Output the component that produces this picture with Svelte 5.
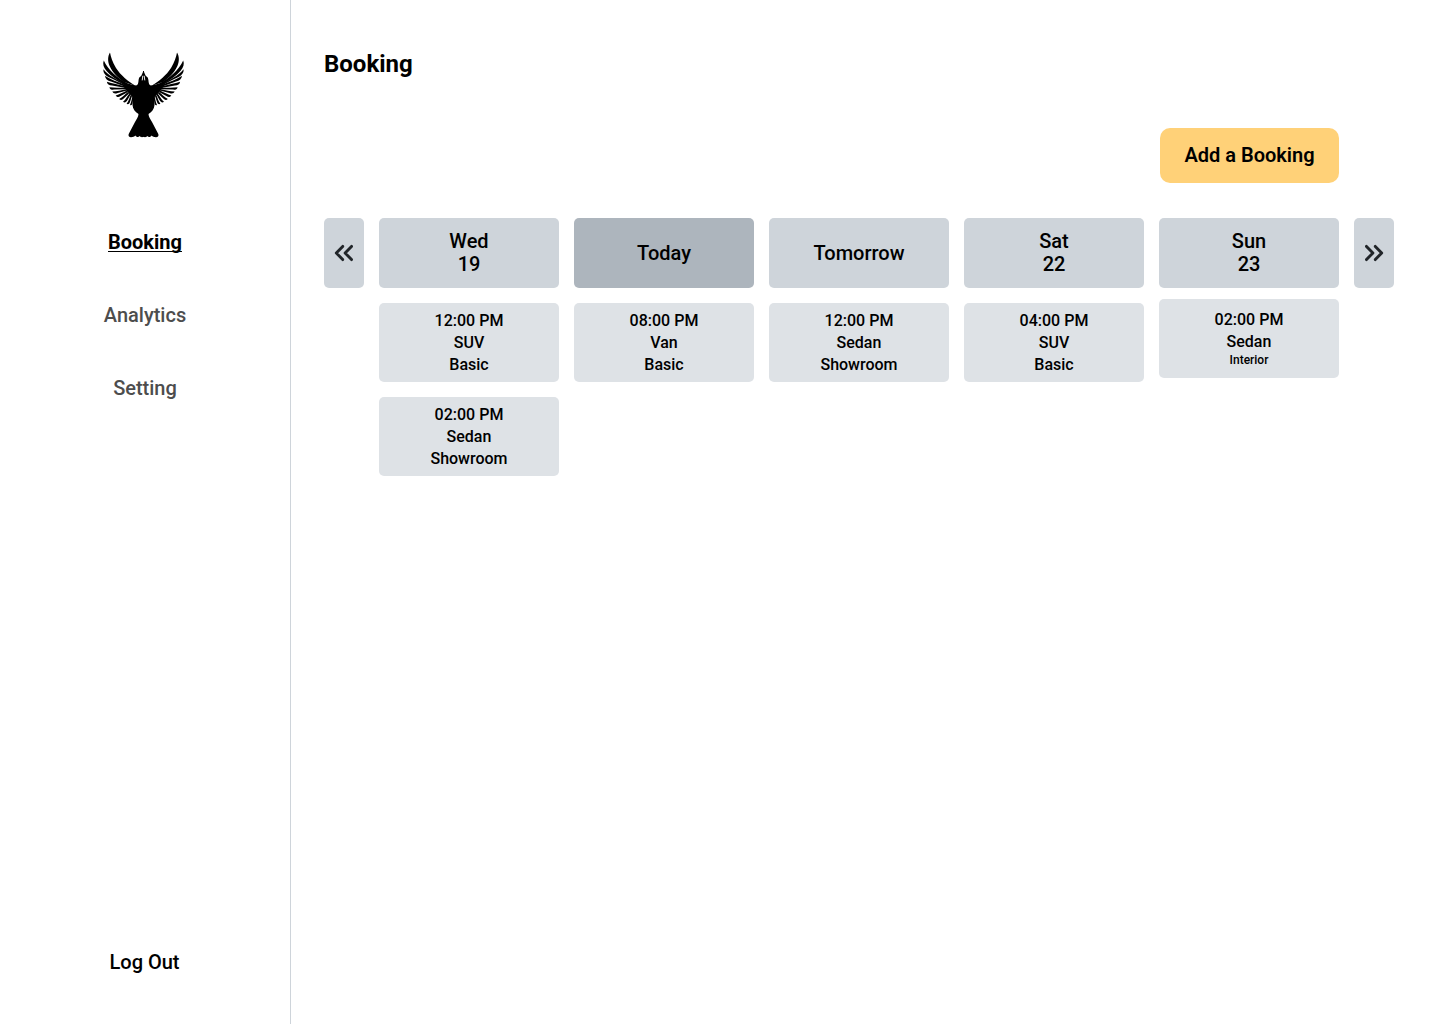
<script>
  const nav = ['Booking', 'Analytics', 'Setting'];
  const days = [
    { label: ['Wed', '19'], items: [['12:00 PM', 'SUV', 'Basic'], ['02:00 PM', 'Sedan', 'Showroom']] },
    { label: ['Today'], today: true, items: [['08:00 PM', 'Van', 'Basic']] },
    { label: ['Tomorrow'], items: [['12:00 PM', 'Sedan', 'Showroom']] },
    { label: ['Sat', '22'], items: [['04:00 PM', 'SUV', 'Basic']] },
    { label: ['Sun', '23'], compact: true, items: [['02:00 PM', 'Sedan', 'Interior']] }
  ];
</script>

{#snippet half()}
  <path d="M12 4.6 C9.6 8.5 9.6 13.5 11.6 18 C14.5 24.5 19 29 26 34 L38 38 C30 33.5 22.5 27 18 20 C14.5 14.5 12.8 9 12 4.6Z" />
  <path d="M5.8 12.6 C4.4 16 5.6 19.6 8.4 22.8 C12.5 27.5 18 31.5 26 36 L29 35.5 C19.5 30 10 22 5.8 12.6Z" />
  <path d="M5.5 21.2 C4.9 24.6 7.2 27.4 11 29.2 C16 31.6 21 34 28 38 L28 36.2 C18.5 31.5 10 27.5 5.5 21.2Z" />
  <path d="M7 27.8 C7.2 31 9.4 32.6 13 33.6 L28 39 L28 37.4 C20 33.8 12 31.6 7 27.8Z" />
  <path d="M8.9 33.8 C9.3 36.4 11 37.5 14 37.6 L28 40 L28 38.6 C21 36.4 14 35.6 8.9 33.8Z" />
  <path d="M11.4 39.2 C12 41.4 13.8 42.1 16.6 41.6 L28 41.2 L28 39.8 C21 39.4 16 39.9 11.4 39.2Z" />
  <path d="M14.3 43.6 C15.3 45.6 17 46 19.6 45 L29 42.6 L28.5 41.2 C23 42.2 19 43.5 14.3 43.6Z" />
  <path d="M17.7 47.4 C18.8 49.2 20.6 49.3 22.6 48 L30 44 L29 42.6 C25 44.4 21.5 46.8 17.7 47.4Z" />
  <path d="M21.2 51 C22.6 52.5 24.2 52.2 25.7 50.6 L31 45.4 L30 44 C27 46.3 24.5 49.4 21.2 51Z" />
  <path d="M25 53.8 C26.6 55 28.1 54.4 29.2 52.6 L32.6 46.6 L31.5 45.4 C29.2 48 27.8 51.6 25 53.8Z" />
  <path d="M28.6 55.8 C30 56.7 31.3 56 31.9 54.2 L34 48 L33 46.6 C31.2 50 30.8 53.4 28.6 55.8Z" />
  <path d="M32 57 C33.2 57.7 34.2 56.8 34.4 55 L36 48 L34.8 47.6 C33.6 51 33.4 54.4 32 57Z" />
  <path d="M46 23 L45.2 23 C44.8 25 43.6 26.6 43.2 28 C41.4 28.8 40.8 30 40.6 32 C40.4 35 40 37.4 38 37.6 C33 37 28 35 24 32.6 L26.5 40 L30.5 45 L34.5 49 L34.5 57 C34.8 61 37 64 40.5 66 C40.5 68.5 38.5 71.5 37 74 L30.7 86 C30 87.7 31 89.2 33 89.2 C35 89.2 36.3 88.8 37.5 87.6 C38.3 89.4 40.5 89.6 41.8 88 C42.8 89.5 44.5 89.4 46 88.6Z" />
{/snippet}

<div class="app">
  <aside>
    <svg class="logo" viewBox="0 0 91 92" aria-label="Bird logo">
      {@render half()}
      <g transform="translate(91 0) scale(-1 1)">{@render half()}</g>
      <path class="beak" d="M44.8 27.8 L44.2 32.4 M46.2 27.8 L46.8 32.4" />
    </svg>
    <nav>
      {#each nav as item, i}
        <a href="#{item}" class:active={i === 0}>{item}</a>
      {/each}
    </nav>
    <a class="logout" href="#logout">Log Out</a>
  </aside>

  <main>
    <h1>Booking</h1>
    <div class="actions"><button class="add">Add a Booking</button></div>
    <section class="calendar">
      <button class="arrow" aria-label="Previous">
        <svg viewBox="0 0 20 18"><path d="M8.7 2.4 L2.3 9 L8.7 15.6 M17.5 2.4 L11.1 9 L17.5 15.6" /></svg>
      </button>
      {#each days as day}
        <div class="day" class:compact={day.compact}>
          <div class="head" class:today={day.today}>
            {#each day.label as line}<span>{line}</span>{/each}
          </div>
          {#each day.items as lines}
            <div class="card">
              {#each lines as line}<span>{line}</span>{/each}
            </div>
          {/each}
        </div>
      {/each}
      <button class="arrow" aria-label="Next">
        <svg viewBox="0 0 20 18"><path d="M2.5 2.4 L8.9 9 L2.5 15.6 M11.3 2.4 L17.7 9 L11.3 15.6" /></svg>
      </button>
    </section>
  </main>
</div>

<style>
  :global(body) { margin: 0; background: #fff; }
  .app {
    display: flex;
    height: 1024px;
    font-family: Roboto, sans-serif;
    font-weight: 500;
    color: #000;
  }
  aside {
    box-sizing: border-box;
    width: 291px;
    border-right: 1px solid #ced4da;
    display: flex;
    flex-direction: column;
    align-items: center;
    padding: 48px 0 50px;
  }
  .logo { width: 91px; height: 92px; margin-right: 3px; }
  .beak { fill: none; stroke: #fff; stroke-width: 0.9; }
  nav {
    display: flex;
    flex-direction: column;
    align-items: center;
    gap: 50px;
    margin-top: 91px;
  }
  a { font-size: 20px; line-height: 23px; color: #4d4d4d; text-decoration: none; }
  a.active {
    font-weight: 700;
    color: #000;
    text-decoration: underline 1px;
    text-underline-offset: 2px;
    text-decoration-skip-ink: none;
  }
  a.logout { margin-top: auto; margin-right: 1px; color: #000; }
  main { width: 1070px; padding: 50px 0 0 33px; }
  h1 { margin: 0; font-size: 24px; line-height: 28px; font-weight: 700; }
  button { border: 0; padding: 0; font: inherit; color: inherit; }
  .actions { display: flex; justify-content: flex-end; padding: 50px 55px 35px 0; }
  .add {
    width: 179px;
    height: 55px;
    padding-bottom: 1px;
    border-radius: 10px;
    background: #ffd178;
    font-size: 20px;
    line-height: 24px;
    font-weight: 600;
  }
  .calendar { display: flex; gap: 15px; align-items: flex-start; }
  .arrow {
    width: 40px;
    height: 70px;
    border-radius: 5px;
    background: #ced4da;
    display: grid;
    place-items: center;
  }
  .arrow svg { width: 20px; height: 18px; }
  .arrow path {
    fill: none;
    stroke: #212529;
    stroke-width: 2.9;
    stroke-linecap: round;
    stroke-linejoin: round;
  }
  .day { width: 180px; display: flex; flex-direction: column; gap: 15px; }
  .day.compact { gap: 11px; }
  .head, .card {
    display: flex;
    flex-direction: column;
    align-items: center;
    justify-content: center;
    border-radius: 5px;
  }
  .head { height: 70px; background: #ced4da; font-size: 20px; line-height: 23px; }
  .head.today { background: #adb5bd; }
  .card { box-sizing: border-box; height: 79px; background: #dee2e6; font-size: 16px; line-height: 22px; }
  .compact .card { padding-bottom: 2px; }
  .compact .card span:last-child { font-size: 12px; line-height: 14px; }
</style>
